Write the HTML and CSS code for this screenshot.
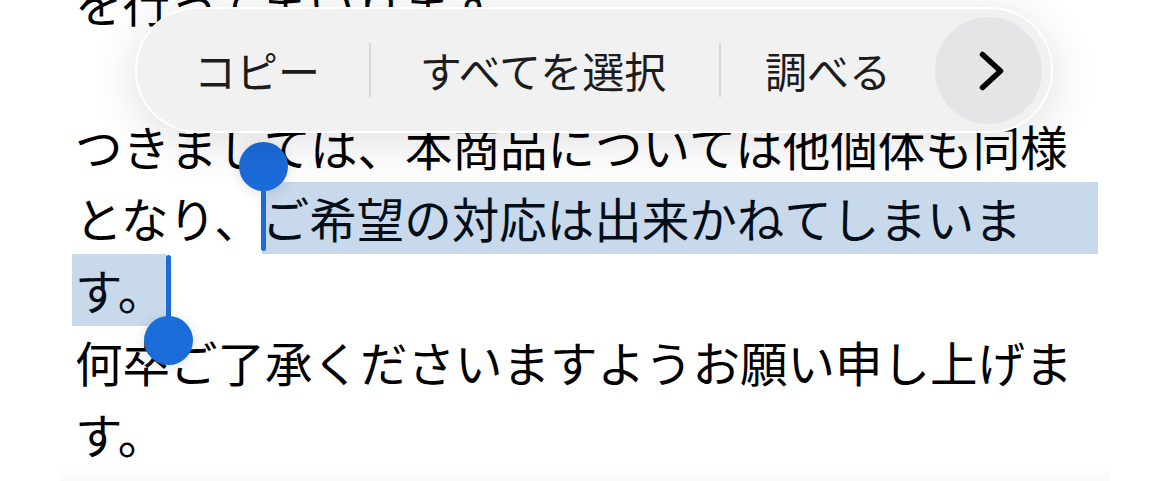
FILE: index.html
```html
<!DOCTYPE html>
<html lang="ja">
<head>
<meta charset="utf-8">
<title>選択メニュー</title>
<link rel="stylesheet" href="styles.css">
</head>
<body>
<div class="page">
  <div class="doc">
    <div class="line">を行ってまいります。</div>
    <div class="line"></div>
    <div class="line">つきましては、本商品については他個体も同様</div>
    <div class="line"><span>となり、</span><span class="sel sel-fill">ご希望の対応は出来かねてしまいま</span></div>
    <div class="line"><span class="sel sel-end">す。</span></div>
    <div class="line">何卒ご了承くださいますようお願い申し上げま</div>
    <div class="line">す。</div>
  </div>

  <div class="bottom-fade"></div>

  <div class="handle handle-start"><span class="knob"></span><span class="stem"></span></div>
  <div class="handle handle-end"><span class="stem"></span><span class="knob"></span></div>

  <div class="menu">
    <div class="item item-copy">コピー</div>
    <div class="sep"></div>
    <div class="item item-all">すべてを選択</div>
    <div class="sep"></div>
    <div class="item item-look">調べる</div>
    <div class="more">
      <svg width="107" height="107" viewBox="0 0 107 107" aria-hidden="true">
        <path d="M47.5 37.5 L65.5 54 L47.5 70.5" fill="none" stroke="#000" stroke-width="5.5" stroke-linecap="round" stroke-linejoin="round"/>
      </svg>
    </div>
  </div>
</div>
</body>
</html>
```

FILE: styles.css
```css
html, body {
  margin: 0;
  padding: 0;
  background: #ffffff;
}

body {
  width: 1170px;
  height: 481px;
  overflow: hidden;
}

.page {
  position: relative;
  width: 1170px;
  height: 481px;
  overflow: hidden;
  background: #ffffff;
}

.doc {
  margin-top: -34px;
  padding-left: 75px;
  width: 1023px;
  font-family: "Noto Sans CJK JP", "Noto Sans", sans-serif;
  font-size: 47.5px;
  line-height: 72px;
  color: #000000;
}

.line {
  display: flex;
  height: 72px;
  white-space: nowrap;
}

.line > span,
.line {
  position: relative;
}

.sel {
  background: #c7d9ea;
  color: #050d18;
}

.sel-fill {
  flex: 1;
}

.sel-end {
  flex: none;
  width: 91px;
  padding-left: 3px;
  margin-left: -3px;
}

.bottom-fade {
  position: absolute;
  left: 60px;
  right: 60px;
  bottom: 0;
  height: 14px;
  background: linear-gradient(to bottom, rgba(0, 0, 0, 0), rgba(0, 0, 0, 0.025));
}

/* selection handles */
.handle {
  position: absolute;
  width: 49px;
  display: flex;
  flex-direction: column;
  align-items: center;
}

.handle-start {
  left: 239px;
  top: 142px;
}

.handle-end {
  left: 144px;
  top: 255px;
}

.knob {
  display: block;
  width: 49px;
  height: 49px;
  border-radius: 50%;
  background: #1b6bd9;
  box-shadow: 0 2px 14px rgba(0, 0, 0, 0.12);
  flex: none;
}

.stem {
  display: block;
  width: 5px;
  border-radius: 3px;
  background: #1b6bd9;
  flex: none;
}

.handle-start .stem {
  height: 63px;
  margin-top: -3px;
}

.handle-end .stem {
  height: 64px;
  margin-bottom: -3px;
}

/* edit menu */
.menu {
  position: absolute;
  left: 135px;
  top: 7px;
  width: 918px;
  height: 126px;
  box-sizing: border-box;
  padding: 0 9px 0 8px;
  border: 2px solid #ffffff;
  border-radius: 63px;
  background: #f1f1f1;
  box-shadow: 0 8px 48px rgba(0, 0, 0, 0.13);
  display: flex;
  align-items: center;
  font-family: "Noto Sans CJK JP", "Noto Sans", sans-serif;
  font-size: 42px;
  color: #1c1c1c;
}

.item {
  flex: none;
  text-align: center;
  line-height: 60px;
}

.item-copy {
  width: 224px;
}

.item-all {
  width: 344px;
  padding-right: 4px;
}

.item-look {
  width: 214px;
}

.sep {
  flex: none;
  width: 2px;
  height: 54px;
  background: #d8d8d8;
}

.more {
  flex: none;
  width: 107px;
  height: 107px;
  border-radius: 50%;
  background: #e5e5e7;
}

.more svg {
  display: block;
}
```
